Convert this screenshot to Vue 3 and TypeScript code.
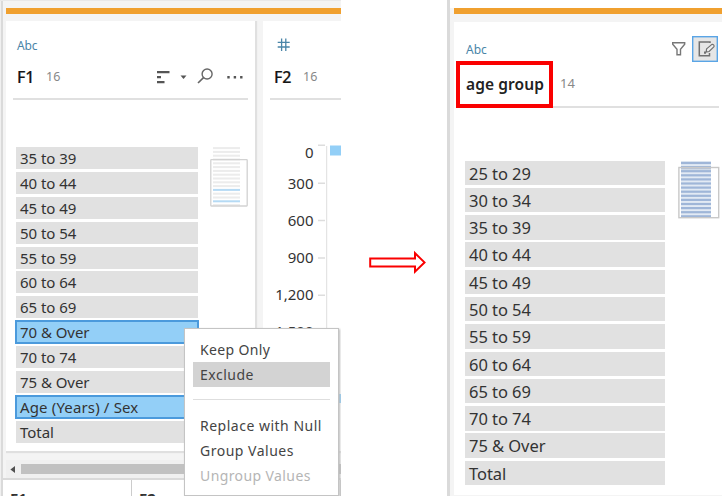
<script setup lang="ts">
interface Row { label: string; selected?: boolean; wide?: boolean }

const leftRows: Row[] = [
  { label: '35 to 39' }, { label: '40 to 44' }, { label: '45 to 49' }, { label: '50 to 54' },
  { label: '55 to 59' }, { label: '60 to 64' }, { label: '65 to 69' },
  { label: '70 & Over', selected: true }, { label: '70 to 74' }, { label: '75 & Over' },
  { label: 'Age (Years) / Sex', selected: true, wide: true }, { label: 'Total' },
]
const rightRows: string[] = [
  '25 to 29', '30 to 34', '35 to 39', '40 to 44', '45 to 49', '50 to 54',
  '55 to 59', '60 to 64', '65 to 69', '70 to 74', '75 & Over', 'Total',
]
const ticks: string[] = ['0', '300', '600', '900', '1,200', '1,500']
const selectedBars = [11, 14]
</script>

<template>
  <main class="page">
    <section class="before">
      <div class="accent"></div>
      <div class="cards">
        <article class="card first">
          <span class="type">Abc</span>
          <header class="head">
            <span class="name">F1</span><span class="count">16</span>
            <svg class="tools" width="90" height="20" viewBox="0 0 90 20">
              <path d="M2 5.2h12.5M2 10.2h4M2 15.2h7.5" stroke="#555" stroke-width="2.2" fill="none" />
              <path d="M25.5 8.5h6l-3 3.5z" fill="#555" />
              <circle cx="52.1" cy="7" r="5" fill="none" stroke="#666" stroke-width="1.4" />
              <path d="M48.5 10.7l-5.5 5.3" stroke="#666" stroke-width="1.7" />
              <path d="M72.3 9h2.4v2.4h-2.4zM78.7 9h2.4v2.4h-2.4zM85.1 9h2.4v2.4h-2.4z" fill="#555" />
            </svg>
          </header>
          <div class="body">
            <ul class="list">
              <li v-for="r in leftRows" :key="r.label" :class="{ selected: r.selected, wide: r.wide }"><span>{{ r.label }}</span></li>
            </ul>
            <svg class="mini" width="39" height="61" viewBox="0 0 39 61">
              <rect v-for="i in 16" :key="i" x="3" :y="(i - 1) * 3.8 + 0.1" width="27" height="2"
                :fill="selectedBars.includes(i - 1) ? '#b5daf4' : '#ececec'" />
              <rect x="0.8" y="12.7" width="36.4" height="46.3" rx="0.5" fill="none" stroke="#d2d2d2" stroke-width="1.3" />
            </svg>
          </div>
        </article>
        <article class="card second">
          <svg class="hash" width="14" height="14" viewBox="0 0 14 14">
            <path d="M4.6 .5v12.5M8.8 .5v12.5M.7 4.3h12M.7 9h12" stroke="#4a85a8" stroke-width="1.3" fill="none" />
          </svg>
          <header class="head">
            <span class="name">F2</span><span class="count">16</span>
          </header>
          <div class="axis">
            <ol class="ticks"><li v-for="t in ticks" :key="t">{{ t }}</li></ol>
            <svg class="scale" width="25" height="306" viewBox="0 0 25 306">
              <path d="M1 1.2h7M1 39.3h7M1 76.6h7M1 114h7M1 151.3h7M1 188.6h7" stroke="#ddd" stroke-width="1.5" />
              <path d="M9.7 2v304" stroke="#dedede" stroke-width="1" />
              <path d="M13 1.5h12v10H13zM13 250h12v9H13z" fill="#93cff7" />
            </svg>
          </div>
        </article>
      </div>
      <div class="scroll">
        <svg width="15" height="18" viewBox="0 0 15 18"><path d="M9 6v7L4.4 9.5z" fill="#505050" /></svg>
        <div class="thumb"></div>
      </div>
      <div class="grid-head"><span>F1</span><span>F2</span></div>

      <nav class="menu">
        <a>Keep Only</a>
        <a class="active">Exclude</a>
        <hr />
        <a>Replace with Null</a>
        <a>Group Values</a>
        <a class="disabled">Ungroup Values</a>
      </nav>
    </section>

    <div class="between">
      <svg width="58" height="26" viewBox="0 0 58 26">
        <path d="M1.2 9.4H46V4.2l9.5 9.2-9.5 9.2v-5.2H1.2z" fill="#fff" stroke="#fa0000" stroke-width="2" />
      </svg>
    </div>

    <section class="after">
      <div class="accent"></div>
      <article class="result">
        <div class="top">
          <span class="type">Abc</span>
          <svg class="filter" width="16" height="16" viewBox="0 0 16 16">
            <path d="M1.7 1.7h12v1.6L9.5 8.2v5.6H6V8.2L1.7 3.3z" fill="none" stroke="#777" stroke-width="1.4" />
          </svg>
          <svg class="edit" width="26" height="26" viewBox="0 0 26 26">
            <rect x=".7" y=".7" width="24.6" height="24.6" fill="#e6e6e6" stroke="#5aa5e6" stroke-width="1.4" />
            <path d="M18 7V6H7.3v13.7H17.5V17" fill="none" stroke="#707070" stroke-width="1.5" />
            <path d="M14.6 12.9l5-4.3q1-.7 2 .3t.2 2l-4.7 4.6-2.9.6z" fill="#eee" stroke="#707070" stroke-width="1.2" />
            <path d="M12 15.5h2v2.2h-2z" fill="#707070" />
          </svg>
        </div>
        <header class="result-head">
          <span class="group-name">age group</span><span class="count">14</span>
        </header>
        <div class="body">
          <ul class="list big">
            <li v-for="r in rightRows" :key="r"><span>{{ r }}</span></li>
          </ul>
          <svg class="mini" width="43" height="59" viewBox="0 0 43 59">
            <rect x="3" y="0" width="30" height="56" fill="#e2eaf4" />
            <rect x="3" y="6" width="30" height="2.5" fill="#bdc9d8" />
            <rect v-for="i in 14" :key="i" x="3" :y="(i - 1) * 4.1 + 0.9" width="30" height="2.2" fill="#9fb6d8" />
            <rect x=".9" y="6.5" width="39.8" height="50.2" fill="none" stroke="#c8c8c8" stroke-width="1.4" />
          </svg>
        </div>
      </article>
    </section>
  </main>
</template>

<style>
body { margin: 0; background: #fff; }
</style>

<style scoped>
* { box-sizing: border-box; }
ul, ol { list-style: none; margin: 0; padding: 0; }
svg { display: block; flex: none; }
.page {
  width: 722px; height: 496px; overflow: hidden; display: flex; background: #fff;
  font-family: "Noto Sans", "Open Sans", sans-serif; color: #333;
}
.before {
  position: relative; width: 341px; height: 496px; flex: none; display: flex; flex-direction: column;
  padding-top: 7px; background: #f4f4f4; border-top: 1px solid #e9e9e9; overflow: hidden;
  box-shadow: inset 1px 0 #f0f0f0, inset 3px 0 #dadada;
}
.accent { height: 6px; flex: none; background: #f0a02f; }
.before > .accent { margin-left: 6px; }
.cards { display: flex; gap: 8px; margin: 7px 0 0 6px; height: 430px; flex: none; }
.card { background: #fff; box-shadow: 1px 1px 1px 1px #e0e0e0; display: flex; flex-direction: column; height: 430px; clip-path: inset(0 -4px -4px 0); }
.first { width: 249px; flex: none; }
.second { width: 78px; flex: none; }
.type { font-size: 12px; line-height: 16px; color: #4a85a8; letter-spacing: -.2px; }
.first > .type { margin: 17px 0 0 11px; height: 16px; }
.hash { margin: 17px 0 0 14px; }
.head { display: flex; align-items: center; height: 33px; flex: none; padding: 0 0 12px 4px; border-bottom: 2px solid #e0e0e0; }
.first .head { margin: 13px 7px 0; }
.second .head { margin: 15px 0 0 7px; }
.name { font-size: 16px; line-height: 20px; font-weight: 500; color: #151515; width: 29px; -webkit-text-stroke: .2px #151515; letter-spacing: -.3px; }
.count { font-size: 12.5px; line-height: 18px; color: #888; }
.tools { margin-left: auto; margin-right: 3px; }
.body { display: flex; margin-top: 47px; }
.list { margin-left: 10px; width: 182px; display: flex; flex-direction: column; gap: 2.9px; }
.list li { height: 22px; flex: none; background: #e1e1e1; padding-left: 4px; font-size: 15px; line-height: 23px; letter-spacing: -.05px; white-space: nowrap; }
.list li.selected { background: #93cff7; outline: 2px solid #4b9adc; outline-offset: -1px; }
.list li.wide { letter-spacing: .15px; }
.first .mini { margin-left: 12px; }
.axis { display: flex; margin-top: 41px; height: 187px; }
.ticks { width: 50.5px; text-align: right; font-size: 15px; line-height: 22px; display: flex; flex-direction: column; flex: none; }
.ticks li { height: 37.1px; flex: none; }
.ticks li:first-child { height: 31px; }
.scale { margin: 3px 0 0 3.5px; }
.scroll { display: flex; align-items: center; height: 18px; margin: 9px 0 0 6px; background: #f0f0f0; flex: none; }
.thumb { height: 10px; flex: 1; background: #c1c1c1; }
.grid-head { display: flex; height: 18px; margin-left: 3px; background: #fff; border-top: 2px solid #dadada; overflow: hidden; flex: none; }
.grid-head span { width: 129px; flex: none; padding: 8px 0 0 7px; font-size: 15px; line-height: 20px; font-weight: 700; border-right: 1px solid #ccc; }
.grid-head span + span { width: 209px; }
.menu {
  position: absolute; left: 184px; top: 327px; width: 155px; height: 168px; padding: 10px 8px 0;
  background: #fff; border: 1px solid #c4c4c4; box-shadow: 1px 1px 2px #bbb; display: flex; flex-direction: column;
}
.menu a { height: 25px; flex: none; padding-left: 7px; font-size: 14px; line-height: 24px; color: #444; white-space: nowrap; letter-spacing: .5px; }
.menu a.active { background: #d3d3d3; line-height: 25px; }
.menu a.disabled { color: #b5b5b5; letter-spacing: .4px; }
.menu a:first-child { height: 23px; line-height: 22px; letter-spacing: .35px; }
.menu hr { width: 100%; height: 1px; flex: none; border: 0; background: #dedede; margin: 12px 0 14px; }
.between { width: 106px; flex: none; padding: 249px 0 0 28px; }
.after {
  width: 275px; height: 496px; flex: none; padding: 8px 0 0 7px; display: flex; flex-direction: column;
  background: linear-gradient(#dadada, #dadada) 0 0 / 3px 100% no-repeat, linear-gradient(#fff, #fff) 3px 0 / 100% 8px no-repeat, #f4f4f4;
}
.result { margin-top: 8px; padding-top: 14px; height: 473px; background: #fff; flex: none; }
.top { display: flex; align-items: center; height: 26px; padding: 0 4px 0 12px; }
.top .type { padding-top: 2px; letter-spacing: 0; }
.filter { margin-left: auto; margin-right: 5px; }
.result-head { display: flex; align-items: center; height: 46px; margin: 0 3px 0 2px; border-bottom: 2px solid #e0e0e0; }
.group-name {
  width: 97px; height: 47px; flex: none; border: 4px solid #fa0000; padding-left: 6px;
  font-size: 15.5px; line-height: 39px; font-weight: 600; color: #222; white-space: nowrap; position: relative; letter-spacing: .1px;
}
.result-head .count { margin-left: 7px; font-size: 13px; padding-bottom: 2px; }
.result .body { margin-top: 52.5px; }
.list.big { margin-left: 11px; width: 199.5px; gap: 2.8px; }
.list.big li { height: 24.5px; font-size: 16.5px; line-height: 26px; }
.result .mini { margin-left: 13.5px; }
</style>
